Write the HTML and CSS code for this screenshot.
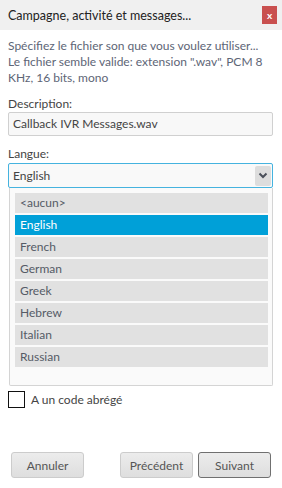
FILE: index.html
```html
<!DOCTYPE html>
<html lang="fr">
<head>
    <meta charset="UTF-8">
    <title>Campagne, activité et messages...</title>
    <link rel="stylesheet" href="styles.css">
</head>
<body>
    <div class="dialog">
        <div class="titlebar">
            <span class="title">Campagne, activité et messages...</span>
            <span class="close">x</span>
        </div>

        <div class="content">
            <p class="hint">Spécifiez le fichier son que vous voulez utiliser...<br>Le fichier semble valide: extension ".wav", PCM 8 KHz, 16 bits, mono</p>

            <label class="field-label">Description:</label>
            <div class="input">Callback IVR Messages.wav</div>

            <label class="field-label">Langue:</label>
            <div class="select">
                <span>English</span>
                <span class="arrow">
                    <svg width="10" height="7" viewBox="0 0 10 7"><path d="M1.5 1.5 L5 5 L8.5 1.5" fill="none" stroke="#4a4f5a" stroke-width="2"/></svg>
                </span>
            </div>

            <div class="dropdown">
                <div class="option">&lt;aucun&gt;</div>
                <div class="option selected">English</div>
                <div class="option">French</div>
                <div class="option">German</div>
                <div class="option">Greek</div>
                <div class="option">Hebrew</div>
                <div class="option">Italian</div>
                <div class="option">Russian</div>
            </div>

            <div class="check-row">
                <span class="checkbox"></span>
                <span>A un code abrégé</span>
            </div>
        </div>

        <div class="buttons">
            <button class="btn">Annuler</button>
            <div class="nav">
                <button class="btn">Précédent</button>
                <button class="btn default">Suivant</button>
            </div>
        </div>
    </div>
</body>
</html>
```

FILE: styles.css
```css
body {
    margin: 0;
    background-color: white;
    font-family: Lato, sans-serif;
    font-size: 12px;
    color: #444;
}
.dialog {
    width: 282px;
    height: 488px;
}
.titlebar {
    height: 30px;
    background-color: #f0f0f0;
    display: flex;
    align-items: center;
    justify-content: space-between;
    padding: 0 5px 0 8px;
}
.title {
    font-size: 12.5px;
    color: #222;
}
.close {
    width: 15px;
    height: 18px;
    background-color: #c9504f;
    color: white;
    font-weight: bold;
    font-size: 10px;
    display: flex;
    align-items: center;
    justify-content: center;
}
.content {
    padding: 0 9px 0 8px;
}
.hint {
    margin: 8px 0 0 0;
    line-height: 16px;
    color: #5d6576;
}
.field-label {
    display: block;
    line-height: 16px;
    margin-top: 10px;
}
.input {
    height: 22px;
    line-height: 22px;
    border: 1px solid #d0d0d0;
    border-radius: 2px;
    background-color: #f8f8f8;
    padding-left: 4px;
}
.select {
    margin-top: 1px;
    height: 23px;
    border: 1px solid #45b3df;
    border-radius: 2px;
    background-color: #f9f9f9;
    display: flex;
    align-items: center;
    justify-content: space-between;
    padding: 0 1px 0 4px;
}
.arrow {
    width: 16px;
    height: 20px;
    background-color: #dddddd;
    border-radius: 2px;
    display: flex;
    align-items: center;
    justify-content: center;
}
.dropdown {
    height: 192px;
    border: 1px solid #d4d4d4;
    border-top: none;
    border-radius: 0 0 2px 2px;
    background-color: #fafafa;
    padding: 5px 4px 0 5px;
    margin-left: 1px;
    display: flex;
    flex-direction: column;
    gap: 2px;
}
.option {
    height: 20px;
    line-height: 20px;
    background-color: #e1e1e1;
    padding-left: 5px;
    color: #555b66;
}
.option.selected {
    background-color: #00a0d8;
    color: white;
}
.check-row {
    margin-top: 5px;
    display: flex;
    align-items: center;
    gap: 6px;
}
.checkbox {
    width: 15px;
    height: 15px;
    border: 1px solid #111;
}
.buttons {
    margin-top: 44px;
    display: flex;
    justify-content: space-between;
    padding: 0 11px 0 11px;
}
.nav {
    display: flex;
    gap: 5px;
}
.btn {
    height: 26px;
    width: 73px;
    font-family: Lato, sans-serif;
    font-size: 12px;
    color: #555;
    background: linear-gradient(#ececec, #dedede);
    border: 1px solid #cccccc;
    border-radius: 3px;
    padding: 0;
}
.btn.default {
    border-color: #707070;
}
```
